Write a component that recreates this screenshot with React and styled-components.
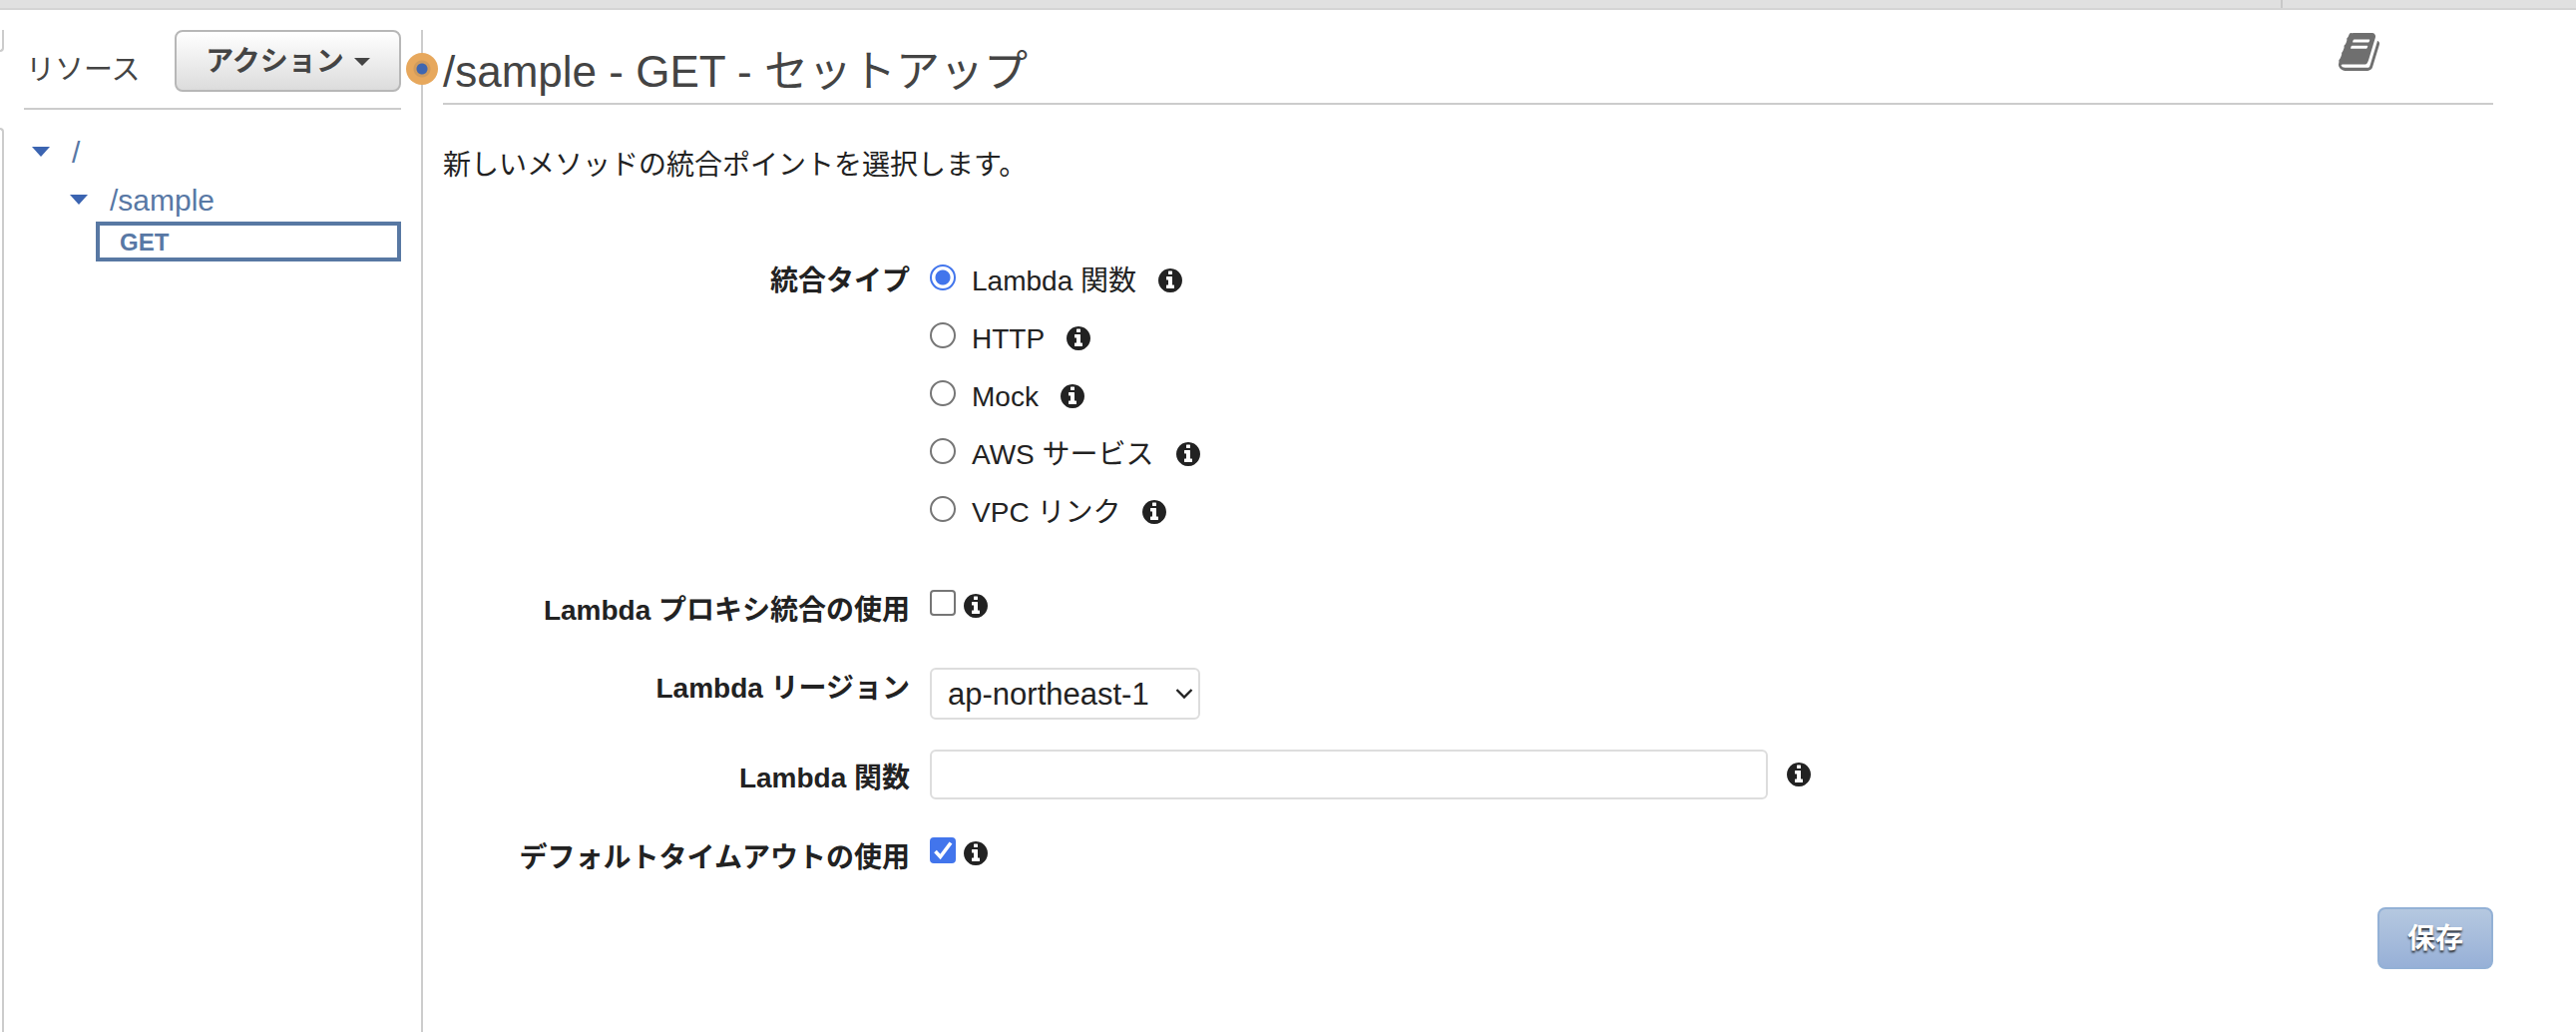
import React, { useState } from "react";
import styled, { createGlobalStyle } from "styled-components";

const GlobalStyle = createGlobalStyle`
  *, *::before, *::after { box-sizing: border-box; }
  body {
    margin: 0;
    background: #fff;
    color: #222;
    font-family: "Liberation Sans", "Noto Sans CJK JP", sans-serif;
    font-size: 28px;
    line-height: 40px;
  }
  button, input, select { font-family: inherit; margin: 0; }
`;

const Page = styled.div`
  min-height: 100vh;
  display: flex;
  flex-direction: column;
`;

const TopBar = styled.header`
  height: 10px;
  background: #e0e0e0;
  border-bottom: 2px solid #d4d4d4;
  display: flex;
  justify-content: flex-end;
`;

const TopBarSection = styled.div`
  width: 296px;
  border-left: 2px solid #c8c8c8;
`;

const Workspace = styled.div`
  flex: 1;
  display: flex;
  padding-top: 20px;
`;

const Edge = styled.div`
  width: 4px;
  display: flex;
  flex-direction: column;
  justify-content: space-between;
  gap: 76px;
`;

const EdgeTop = styled.div`
  height: 22px;
  border: solid #ccc;
  border-width: 0 2px 2px 0;
  border-bottom-right-radius: 4px;
`;

const EdgeBottom = styled.div`
  flex: 1;
  border: solid #ccc;
  border-width: 2px 2px 0 0;
  border-top-right-radius: 4px;
`;

const Sidebar = styled.aside`
  position: relative;
  flex: none;
  width: 420px;
  padding: 0 20px;
  border-right: 2px solid #ccc;
`;

const SplitHandle = styled.span`
  position: absolute;
  top: 23px;
  right: -17px;
  width: 32px;
  height: 32px;
  border-radius: 50%;
  background: radial-gradient(circle, #3f66b0 0 5px, #d09b5d 6px 8px, #e7a85d 9px);
  cursor: col-resize;
`;

const SidebarHeader = styled.div`
  display: flex;
  justify-content: space-between;
  align-items: flex-start;
  padding-bottom: 16px;
  border-bottom: 2px solid #ccc;
`;

const SidebarTitle = styled.h2`
  margin: 0;
  padding: 20px 0 0 2px;
  font-size: 29px;
  font-weight: 400;
  color: #444;
`;

const Button = styled.button`
  display: flex;
  align-items: center;
  justify-content: center;
  height: 62px;
  padding: 2px 28px 0;
  border: 2px solid #b7b7b7;
  border-radius: 8px;
  background: linear-gradient(#fff, #dcdcdc);
  color: #444;
  font-size: 28px;
  font-weight: 700;
  line-height: 40px;
  white-space: nowrap;
  cursor: pointer;
`;

const ActionButton = styled(Button)`
  width: 227px;
  gap: 10px;
`;

const SaveButton = styled(Button)`
  border-color: #93b1d6;
  background: linear-gradient(#b5c8e0, #97b0d7);
  color: #fff;
  text-shadow: 0 2px 2px rgba(0, 0, 0, 0.75);
`;

const Caret = styled.span`
  border: solid transparent;
  border-width: ${(p) => (p.$small ? "8px 8px 0" : "10px 9px 0")};
  border-top-color: ${(p) => (p.$small ? "#444" : "#3b64b1")};
`;

const Tree = styled.ul`
  list-style: none;
  margin: 0;
  padding: ${(p) => (p.$root ? "16px 0 0" : "0")};
`;

const TreeRow = styled.div`
  display: flex;
  align-items: center;
  gap: 22px;
  height: 48px;
  padding-top: 4px;
  padding-left: ${(p) => 8 + p.$depth * 38}px;
`;

const TreeLink = styled.a`
  padding-top: 2px;
  color: #5878a5;
  font-size: 30px;
  text-decoration: none;
`;

const MethodLink = styled.a`
  display: block;
  margin-left: 72px;
  padding: 2px 0 0 20px;
  border: 4px solid #5878a3;
  color: #5878a5;
  font-size: 24px;
  font-weight: 700;
  line-height: 30px;
  text-decoration: none;
`;

const Main = styled.main`
  flex: 1;
  min-width: 0;
  padding: 0 83px 40px 20px;
`;

const MainHeader = styled.div`
  display: flex;
  justify-content: space-between;
  align-items: flex-start;
  padding-right: 114px;
  border-bottom: 2px solid #ccc;
`;

const Title = styled.h1`
  margin: 0;
  padding-top: 11px;
  color: #444;
  font-size: 44px;
  font-weight: 400;
  line-height: 62px;
`;

const DocsLink = styled.a`
  display: flex;
  padding-top: 3px;
  color: #6f6f6f;
`;

const Intro = styled.p`
  margin: 41px 0 0;
`;

const Form = styled.form`
  display: flex;
  flex-direction: column;
  padding-top: 75px;
`;

const Row = styled.div`
  display: grid;
  grid-template-columns: 23fr 77fr;
  column-gap: 20px;
  margin-top: ${(p) => p.$space || 0}px;
`;

const Label = styled.label`
  font-weight: 700;
  line-height: 38px;
  text-align: right;
  padding-top: ${(p) => p.$top || 2}px;
`;

const Options = styled.div`
  display: flex;
  flex-direction: column;
  gap: 18px;
`;

const Option = styled.div`
  display: flex;
  align-items: center;
  gap: 22px;
`;

const OptionLabel = styled.label`
  display: flex;
  align-items: center;
  gap: 16px;
  padding-top: 2px;
  line-height: 38px;
`;

const Radio = styled.input`
  appearance: none;
  width: 26px;
  height: 26px;
  margin-bottom: 8px;
  border: 2px solid #767676;
  border-radius: 50%;
  background: #fff;
  &:checked {
    border-color: #4275ec;
    background: radial-gradient(circle, #4275ec 0 7px, #fff 8px);
  }
`;

const CheckField = styled.div`
  display: flex;
  align-items: flex-start;
  gap: 8px;
`;

const CheckWrap = styled.span`
  position: relative;
  display: flex;
`;

const Checkbox = styled.input`
  appearance: none;
  width: 26px;
  height: 26px;
  border: 2px solid #767676;
  border-radius: 4px;
  background: #fff;
  &:checked {
    border-color: #4275ec;
    background: #4275ec;
  }
`;

const CheckMark = styled.svg`
  position: absolute;
  inset: 0;
  pointer-events: none;
`;

const CheckInfo = styled.span`
  display: flex;
  padding-top: 4px;
`;

const SelectWrap = styled.div`
  position: relative;
  width: 271px;
`;

const Select = styled.select`
  appearance: none;
  display: block;
  width: 100%;
  height: 52px;
  padding: 0 16px;
  border: 2px solid #ddd;
  border-radius: 6px;
  background: #fff;
  color: #222;
  font-size: 31px;
`;

const Chevron = styled.svg`
  position: absolute;
  right: 7px;
  top: 20px;
  pointer-events: none;
`;

const InputField = styled.div`
  display: flex;
  align-items: center;
  gap: 19px;
`;

const TextInput = styled.input`
  flex: 1;
  min-width: 0;
  max-width: 840px;
  height: 50px;
  padding: 0 16px;
  border: 2px solid #ddd;
  border-radius: 6px;
  background: #fff;
  font-size: 28px;
`;

const Actions = styled.div`
  display: flex;
  justify-content: flex-end;
  margin-top: 30px;
`;

const InfoIcon = () => (
  <svg width="24" height="24" viewBox="128 128 1536 1536" fill="#222" aria-hidden="true">
    <path d="M1152 1376v-160q0-14-9-23t-23-9h-96V672q0-14-9-23t-23-9H672q-14 0-23 9t-9 23v160q0 14 9 23t23 9h96v320h-96q-14 0-23 9t-9 23v160q0 14 9 23t23 9h448q14 0 23-9t9-23zm-128-896V320q0-14-9-23t-23-9H800q-14 0-23 9t-9 23v160q0 14 9 23t23 9h192q14 0 23-9t9-23zm640 416q0 209-103 385.5T1281.5 1561 896 1664t-385.5-103T231 1281.5 128 896t103-385.5T510.5 231 896 128t385.5 103T1561 510.5 1664 896z" />
  </svg>
);

const BookIcon = () => (
  <svg width="41" height="38" viewBox="0 127 1664 1537" fill="currentColor" aria-hidden="true">
    <path d="M1639 478q40 57 18 129l-275 906q-19 64-76.5 107.5T1183 1664H260q-77 0-148.5-53.5T12 1479q-24-67-2-127 0-4 3-27t4-37q1-8-3-21.5t-3-19.5q2-11 8-21t16.5-23.5T52 1179q23-38 45-91.5t30-91.5q3-10 .5-30t-.5-28q3-11 17-28t17-23q21-36 42-92t25-90q1-9-2.5-32t.5-28q4-13 22-30.5t22-22.5q19-26 42.5-84.5T340 411q1-8-3-25.5t-2-26.5q2-8 9-18t18-23 17-21q8-12 16.5-30.5t15-35 16-36 19.5-32T469.5 139t36-11.5T553 133l-1 3q38-9 51-9h761q74 0 114 56t18 130l-274 906q-36 119-71.5 153.5T1022 1407H153q-27 0-38 15-11 16-1 43 24 70 144 70h923q29 0 56-15.5t35-41.5l300-987q7-22 5-57 38 15 59 43zM575 480q-4 13 2 22.5t20 9.5h608q13 0 25.5-9.5T1247 480l21-64q4-13-2-22.5t-20-9.5H638q-13 0-25.5 9.5T596 416zm-83 256q-4 13 2 22.5t20 9.5h608q13 0 25.5-9.5T1164 736l21-64q4-13-2-22.5t-20-9.5H555q-13 0-25.5 9.5T513 672z" />
  </svg>
);

const integrations = [
  { id: "lambda", name: "Lambda 関数" },
  { id: "http", name: "HTTP" },
  { id: "mock", name: "Mock" },
  { id: "aws", name: "AWS サービス" },
  { id: "vpc", name: "VPC リンク" },
];

function CheckRow({ id, label, initial }) {
  const [checked, setChecked] = useState(initial);
  return (
    <>
      <Label htmlFor={id}>{label}</Label>
      <CheckField>
        <CheckWrap>
          <Checkbox
            id={id}
            type="checkbox"
            checked={checked}
            onChange={(e) => setChecked(e.target.checked)}
          />
          {checked && (
            <CheckMark width="26" height="26" viewBox="0 0 26 26" fill="none" aria-hidden="true">
              <path d="M5.5 14 10.500 19.500 21 5.500" stroke="#fff" strokeWidth="3.6" />
            </CheckMark>
          )}
        </CheckWrap>
        <CheckInfo>
          <InfoIcon />
        </CheckInfo>
      </CheckField>
    </>
  );
}

export default function App() {
  const [type, setType] = useState("lambda");
  return (
    <Page>
      <GlobalStyle />
      <TopBar>
        <TopBarSection />
      </TopBar>
      <Workspace>
        <Edge>
          <EdgeTop />
          <EdgeBottom />
        </Edge>
        <Sidebar>
          <SidebarHeader>
            <SidebarTitle>リソース</SidebarTitle>
            <ActionButton type="button">
              アクション
              <Caret $small />
            </ActionButton>
          </SidebarHeader>
          <Tree $root>
            <li>
              <TreeRow $depth={0}>
                <Caret />
                <TreeLink href="#root">/</TreeLink>
              </TreeRow>
              <Tree>
                <li>
                  <TreeRow $depth={1}>
                    <Caret />
                    <TreeLink href="#sample">/sample</TreeLink>
                  </TreeRow>
                  <MethodLink href="#sample-get">GET</MethodLink>
                </li>
              </Tree>
            </li>
          </Tree>
          <SplitHandle />
        </Sidebar>
        <Main>
          <MainHeader>
            <Title>/sample - GET - セットアップ</Title>
            <DocsLink href="#docs" aria-label="ドキュメント">
              <BookIcon />
            </DocsLink>
          </MainHeader>
          <Intro>新しいメソッドの統合ポイントを選択します。</Intro>
          <Form onSubmit={(e) => e.preventDefault()}>
            <Row role="radiogroup" aria-labelledby="type-label">
              <Label as="span" id="type-label">統合タイプ</Label>
              <Options>
                {integrations.map((item) => (
                  <Option key={item.id}>
                    <OptionLabel>
                      <Radio
                        type="radio"
                        name="integration"
                        value={item.id}
                        checked={type === item.id}
                        onChange={() => setType(item.id)}
                      />
                      {item.name}
                    </OptionLabel>
                    <InfoIcon />
                  </Option>
                ))}
              </Options>
            </Row>
            <Row $space={58}>
              <CheckRow id="proxy" label="Lambda プロキシ統合の使用" initial={false} />
            </Row>
            <Row $space={38}>
              <Label htmlFor="region">Lambda リージョン</Label>
              <SelectWrap>
                <Select id="region" defaultValue="ap-northeast-1">
                  <option>ap-northeast-1</option>
                </Select>
                <Chevron width="18" height="12" viewBox="0 0 18 12" fill="none" aria-hidden="true">
                  <path d="M1.5 2 9 9.500 16.500 2" stroke="#222" strokeWidth="2.4" />
                </Chevron>
              </SelectWrap>
            </Row>
            <Row $space={30}>
              <Label htmlFor="function" $top={10}>Lambda 関数</Label>
              <InputField>
                <TextInput id="function" type="text" />
                <InfoIcon />
              </InputField>
            </Row>
            <Row $space={38}>
              <CheckRow id="timeout" label="デフォルトタイムアウトの使用" initial={true} />
            </Row>
            <Actions>
              <SaveButton type="submit">保存</SaveButton>
            </Actions>
          </Form>
        </Main>
      </Workspace>
    </Page>
  );
}
